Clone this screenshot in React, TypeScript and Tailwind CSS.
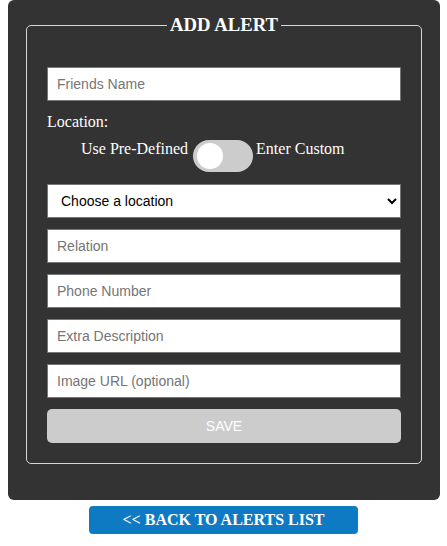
import { useState } from 'react';

const fieldClass =
  'block w-full h-[34px] bg-white border border-[#767676] px-[9px] text-[14px] text-black font-["Liberation_Sans",Arial,sans-serif] placeholder:text-[#757575] outline-none';

export default function App() {
  const [custom, setCustom] = useState(false);

  return (
    <div className="w-[447px] min-h-[546px] bg-white font-['Liberation_Serif','Times_New_Roman',serif]">
      {/* Alert form panel */}
      <div className="ml-2 w-[432px] bg-[#333333] rounded-[6px] px-[18px] pt-[14px] pb-[36px]">
        <fieldset className="border border-[#d6d6d6] rounded-[5px] px-5 pb-5">
          <legend className="mx-auto px-[3px]">
            <h3 className="text-[18.72px] leading-[22px] font-bold text-white">ADD ALERT</h3>
          </legend>

          <div className="pt-[31px]">
            <input className={fieldClass} placeholder="Friends Name" />

            <p className="mt-[12px] text-[16px] leading-[18px] text-white">Location:</p>

            <div className="mt-[9px] flex items-start pl-[34px] text-[16px] leading-[18px] text-white">
              <span className="mr-[5px]">Use Pre-Defined</span>
              <button
                onClick={() => setCustom(!custom)}
                className={`w-[60px] h-[32px] rounded-full bg-[#cccccc] flex items-center px-[4px] ${custom ? 'justify-end' : 'justify-start'}`}
              >
                <span className="block w-[26px] h-[26px] rounded-full bg-white" />
              </button>
              <span className="ml-[3px]">Enter Custom</span>
            </div>

            <select className={`${fieldClass} mt-[12px] px-[8px]`} defaultValue="">
              <option value="">Choose a location</option>
              <option value="home">Home</option>
              <option value="work">Work</option>
            </select>

            <input className={`${fieldClass} mt-[11px]`} placeholder="Relation" />
            <input className={`${fieldClass} mt-[11px]`} placeholder="Phone Number" />
            <input className={`${fieldClass} mt-[11px]`} placeholder="Extra Description" />
            <input className={`${fieldClass} mt-[11px]`} placeholder="Image URL (optional)" />

            <button className="mt-[11px] w-full h-[34px] rounded-[5px] bg-[#cccccc] text-white text-[14px] font-['Liberation_Sans',Arial,sans-serif]">
              SAVE
            </button>
          </div>
        </fieldset>
      </div>

      {/* Back link */}
      <div className="flex justify-center mt-[6px]">
        <button className="w-[269px] h-[28px] rounded-[4px] bg-[#0e7ac4] text-white text-[16px] font-bold">
          &lt;&lt; BACK TO ALERTS LIST
        </button>
      </div>
    </div>
  );
}
